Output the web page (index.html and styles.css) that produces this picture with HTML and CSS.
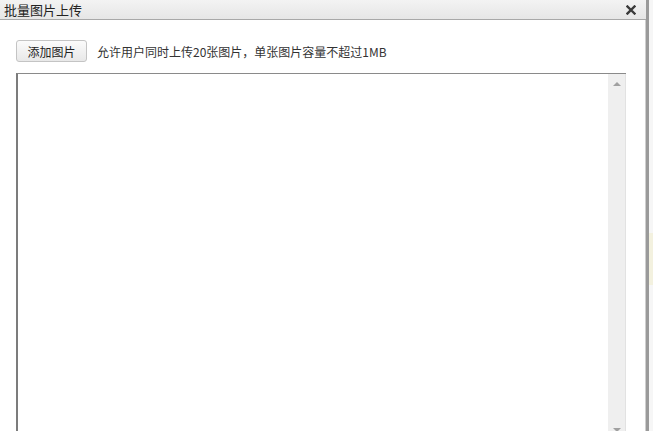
FILE: index.html
```html
<!DOCTYPE html>
<html>
<head>
<meta charset="utf-8">
<link rel="stylesheet" href="styles.css">
</head>
<body>
<div class="page">
  <div class="dialog">
    <div class="titlebar">
      <span class="title">批量图片上传</span>
      <svg class="close" width="10" height="10" viewBox="0 0 10 10"><path d="M1.5 1.5 L8.5 8.5 M8.5 1.5 L1.5 8.5" stroke="#3a3a3a" stroke-width="2.4" stroke-linecap="square"/></svg>
    </div>
    <div class="content">
      <div class="toolbar">
        <button class="btn">添加图片</button>
        <span class="hint">允许用户同时上传20张图片，单张图片容量不超过1MB</span>
      </div>
      <div class="listbox">
        <div class="listarea"></div>
        <div class="scrollbar">
          <span class="arrow up"></span>
          <span class="arrow down"></span>
        </div>
      </div>
    </div>
  </div>
  <div class="backdrop"></div>
</div>
</body>
</html>
```
FILE: styles.css
```css
html, body {
  margin: 0;
  padding: 0;
  background: #fff;
  overflow: hidden;
}
.page {
  display: flex;
  width: 653px;
  height: 431px;
}
.dialog {
  width: 646px;
  height: 431px;
  background: #fff;
  border-right: 3px solid #9a9a9a;
  box-shadow: inset -1px 0 0 #cfcfcf;
  display: flex;
  flex-direction: column;
  font-family: "Noto Sans CJK SC", "Liberation Sans", sans-serif;
}
.backdrop {
  flex: 1;
  background: linear-gradient(#f6f6f6 0, #f6f6f6 233px, #f3f1df 233px, #f3f1df 285px, #f6f6f6 285px);
}
.titlebar {
  height: 19px;
  flex: none;
  display: flex;
  align-items: center;
  justify-content: space-between;
  padding: 0 10px 0 4px;
  background: linear-gradient(#f3f3f3, #e6e6e6);
  border-bottom: 1px solid #a8a8a8;
  box-sizing: border-box;
  height: 20px;
}
.title {
  font-size: 13px;
  color: #222;
  line-height: 19px;
}
.close {
  display: block;
}
.content {
  padding: 20px 0 0 16px;
  flex: 1;
  display: flex;
  flex-direction: column;
  gap: 11px;
  min-height: 0;
}
.toolbar {
  display: flex;
  align-items: center;
  gap: 10px;
  height: 22px;
}
.btn {
  width: 71px;
  height: 22px;
  padding: 0;
  font-family: inherit;
  font-size: 12px;
  color: #222;
  border: 1px solid #c4c4c4;
  border-radius: 3px;
  background: linear-gradient(#fbfbfb, #e8e8e8);
}
.hint {
  font-size: 12px;
  color: #333;
}
.listbox {
  width: 610px;
  flex: 1;
  display: flex;
  border-top: 1px solid #8a8a8a;
  border-left: 2px solid #7c7c7c;
  box-sizing: border-box;
  margin-bottom: -20px;
}
.listarea {
  flex: 1;
}
.scrollbar {
  width: 18px;
  background: #efefef;
  border-right: 1px solid #e2e2e2;
  display: flex;
  flex-direction: column;
  justify-content: space-between;
  align-items: center;
  padding: 8px 0 0;
  height: 358px;
  box-sizing: border-box;
}
.arrow {
  width: 0;
  height: 0;
  border-left: 4px solid transparent;
  border-right: 4px solid transparent;
}
.arrow.up {
  border-bottom: 4px solid #a0a0a0;
}
.arrow.down {
  border-top: 4px solid #a0a0a0;
}
```
